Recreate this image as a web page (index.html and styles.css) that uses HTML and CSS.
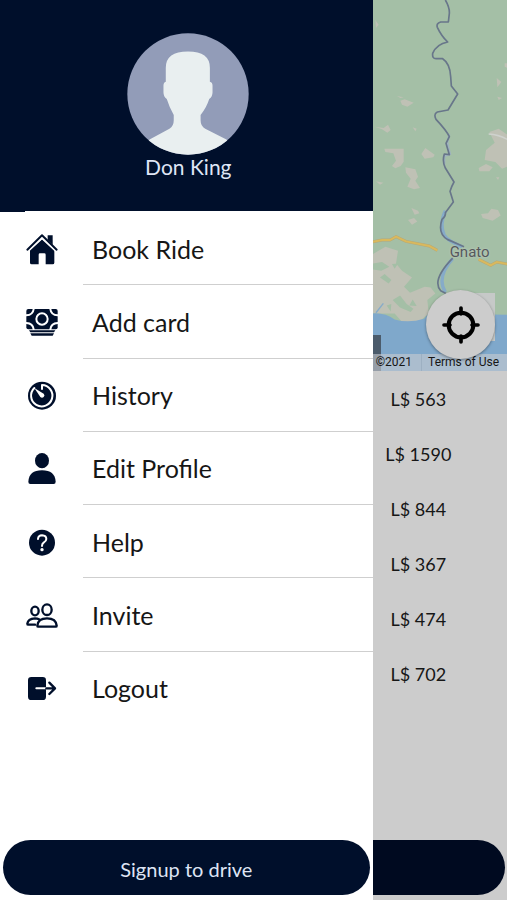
FILE: index.html
```html
<!DOCTYPE html>
<html lang="en">
<head>
<meta charset="utf-8">
<meta name="viewport" content="width=device-width, initial-scale=1">
<title>Ride menu</title>
<link rel="stylesheet" href="styles.css">
</head>
<body>
<div class="app">
  <aside class="drawer">
    <header class="profile">
      <svg class="avatar" viewBox="80 37 368 368" aria-hidden="true">
        <defs><clipPath id="disc"><circle cx="264" cy="221" r="183"/></clipPath></defs>
        <g clip-path="url(#disc)">
          <rect x="80" y="37" width="368" height="368" fill="#929cb8"/>
          <path fill="#e9eff0" d="M197 184V142Q197 93 264 93Q330 93 330 142V184Q338 186 338 196V216Q338 230 328 236Q320 262 302 284V300Q302 318 316 326L380 358L420 410H110L148 358L208 326Q221 318 221 300V284Q208 262 200 236Q190 230 190 216V196Q190 186 197 184Z"/>
        </g>
      </svg>
      <h1 class="name">Don King</h1>
    </header>

    <nav class="menu">
      <a class="item" href="#book">
        <svg class="icon" viewBox="0 0 96 96" aria-hidden="true">
          <path d="M12 51L48 18L85 51V89Q85 94 80 94H59V65Q59 61 55 61H42Q38 61 38 65V94H17Q12 94 12 89Z"/>
          <path d="M65 7H80V36L65 21Z"/>
          <path class="gap" d="M5 56L48 16L91 56"/>
          <path class="roof" d="M4 50L48 7L92 50"/>
        </svg>
        <span class="label">Book Ride</span>
      </a>
      <a class="item" href="#card">
        <svg class="icon" viewBox="0 0 96 96" aria-hidden="true">
          <rect x="1" y="9" width="94" height="61" rx="6"/>
          <g class="light" stroke-width="6">
            <circle cx="48" cy="39" r="17"/>
            <path d="M23 9Q21 27 1 28M73 9Q75 27 95 28M1 51Q21 52 23 70M95 51Q75 52 73 70"/>
          </g>
          <path d="M9 73H88L84 79H13ZM13 82H84L80 89H17Z"/>
        </svg>
        <span class="label">Add card</span>
      </a>
      <a class="item" href="#history">
        <svg class="icon" viewBox="0 0 96 96" aria-hidden="true">
          <circle cx="48" cy="50" r="42"/>
          <path class="light" stroke-width="6" d="M48 30V18A32 32 0 1 1 25 27"/>
          <path fill="#fff" d="M25 27L53 44A7 7 0 1 1 43 54Z"/>
        </svg>
        <span class="label">History</span>
      </a>
      <a class="item" href="#profile">
        <svg class="icon" viewBox="0 0 96 96" aria-hidden="true">
          <ellipse cx="48" cy="26" rx="21" ry="23"/>
          <path d="M7 89Q9 55 48 55Q87 55 89 89Q89 96 83 96H13Q7 96 7 89Z"/>
        </svg>
        <span class="label">Edit Profile</span>
      </a>
      <a class="item" href="#help">
        <svg class="icon" viewBox="0 0 96 96" aria-hidden="true">
          <circle cx="48" cy="50" r="39"/>
          <path class="light" stroke-width="6" d="M36 39Q37 28 48 28Q61 29 61 39Q61 45 53 50Q48 53 48 60"/>
          <circle cx="48" cy="71" r="5" fill="#fff"/>
        </svg>
        <span class="label">Help</span>
      </a>
      <a class="item" href="#invite">
        <svg class="icon line" viewBox="0 0 96 96" aria-hidden="true">
          <ellipse cx="63" cy="32" rx="14" ry="16"/>
          <ellipse cx="27" cy="36" rx="11" ry="13"/>
          <path d="M34 80Q36 58 63 58Q90 58 92 80Q92 83 89 83H37Q34 83 34 80Z"/>
          <path d="M39 61Q34 58 27 58Q6 59 4 74Q4 77 7 77H27"/>
        </svg>
        <span class="label">Invite</span>
      </a>
      <a class="item" href="#logout">
        <svg class="icon" viewBox="0 0 96 96" aria-hidden="true">
          <rect x="6" y="15" width="54" height="69" rx="10"/>
          <path class="light" stroke-width="6" d="M31 49H60"/>
          <path class="line" d="M61 49H86M70 32L87 49L70 66"/>
        </svg>
        <span class="label">Logout</span>
      </a>
    </nav>

    <button class="signup" type="button">Signup to drive</button>
  </aside>

  <main class="screen">
    <section class="map">
      <svg class="terrain" viewBox="23 0 403 1113" preserveAspectRatio="xMinYMin slice" aria-hidden="true">
        <rect x="0" width="440" height="1113" fill="#a4bfa6"/>
        <g fill="#bfc1b5">
          <path d="M105 302L118 298L145 308L126 320L110 314ZM95 288L115 292L105 294ZM28 380L55 384L68 374L76 390L66 398L50 388ZM57 446L115 446V485L106 498L90 505L80 498L92 482L84 460L60 456ZM120 502L150 508L158 530L150 542L164 564L146 568L126 560L136 536L122 518ZM168 462L180 444L208 464L204 472L178 476ZM372 396L400 386L426 404V500L410 506L390 486L358 480L362 450L388 428ZM340 504L362 492L382 502L372 514L342 514ZM394 234L408 246L396 262ZM396 290L410 294L400 300ZM392 532L402 532L398 540ZM418 190H426V204L418 200ZM142 382L154 386L150 394ZM32 544L54 548L44 554ZM30 60L40 74L32 84Z"/>
          <path d="M347 642L368 640L378 626L398 630L406 646L382 662L352 654ZM138 624L158 632L162 640L148 644ZM128 660L146 654L156 664L140 674Z"/>
          <path d="M23 762L60 740L98 752L92 790L110 812L140 832L116 860L134 878L178 860L196 862L210 880L186 900L190 940L160 966H110L88 940H23Z"/>
        </g>
        <g fill="#a4bfa6">
          <path d="M23 790L50 786L72 800L48 812L23 808ZM58 822L78 840L70 850L44 832ZM82 900L104 886L124 912L144 926L136 936L104 922ZM132 916L142 898L154 918ZM64 916L78 912L76 934ZM80 792L98 790L88 806Z"/>
        </g>
        <path fill="#7fa8cb" d="M23 940Q60 938 88 958Q130 970 176 956L190 940L426 944V1113H23Z"/>
        <path fill="none" stroke="#86abc9" stroke-width="4" d="M32 938L54 910"/>
        <path fill="none" stroke="#86abc9" stroke-width="10" d="M240 632Q222 670 236 704Q246 722 290 740M262 776Q212 832 240 876"/>
        <path fill="none" stroke="#9eb2c0" stroke-width="6" d="M252 402L246 428L254 462L237 468V494"/>
        <path fill="none" stroke="#68768a" stroke-width="5" stroke-linejoin="round" d="M240 0Q253 22 252 40L249 66H226Q212 70 216 82Q228 108 247 126Q214 132 202 160Q200 176 212 176H232Q254 190 256 230L258 258L277 282L248 330L216 336Q204 342 212 358Q244 392 252 410L242 430L252 464L237 462Q230 484 240 504L266 546Q258 560 254 574L264 606L240 638Q242 648 230 658Q216 700 246 718L296 740M262 774Q198 840 226 872L242 880"/>
        <path fill="none" stroke="#b5a878" stroke-width="9" d="M23 725L50 720H74L92 710L122 724L192 738L216 751M340 778L376 796L394 786L426 792"/>
        <path fill="none" stroke="#d9b95d" stroke-width="6" d="M23 725L50 720H74L92 710L122 724L192 738L216 751M340 778L376 796L394 786L426 792"/>
        <path fill="none" stroke="#cfd2ce" stroke-width="4" d="M370 402Q400 404 426 418"/>
      </svg>
      <span class="place">Gnato</span>
      <span class="control"></span>
      <span class="stub"></span>
      <div class="legal">
        <span class="year">©2021</span>
        <a class="terms" href="#terms">Terms of Use</a>
      </div>
      <button class="locate" type="button" aria-label="Centre on my location">
        <svg class="target" viewBox="0 0 114 114" aria-hidden="true">
          <circle cx="57" cy="57" r="37"/>
          <path d="M57 6V24M57 90V108M6 57H24M90 57H108"/>
        </svg>
      </button>
    </section>
    <ul class="prices">
      <li>L$ 563</li>
      <li>L$ 1590</li>
      <li>L$ 844</li>
      <li>L$ 367</li>
      <li>L$ 474</li>
      <li>L$ 702</li>
    </ul>
    <div class="request"></div>
  </main>
</div>
</body>
</html>
```
FILE: styles.css
```css
* { box-sizing: border-box; }

body {
  margin: 0;
  font-family: Lato, "Noto Sans", sans-serif;
  color: #161616;
  background: #cccccc;
}

.app {
  display: flex;
  min-height: 100vh;
}

.drawer {
  flex: 0 0 73.5%;
  display: flex;
  flex-direction: column;
  background: #fff;
}

.profile {
  position: relative;
  display: flex;
  flex-direction: column;
  align-items: center;
  height: 211px;
  padding-top: 33px;
  padding-left: 4px;
  background: #000f2b;
}

.profile::after {
  content: "";
  position: absolute;
  left: 0;
  top: 100%;
  width: 25px;
  height: 1px;
  background: #000f2b;
}

.avatar {
  display: block;
  width: 122px;
  height: 122px;
}

.name {
  margin: 0;
  font-size: 21px;
  line-height: 24px;
  font-weight: 400;
  color: #dfe5f5;
}

.menu {
  display: grid;
  grid-template-rows: repeat(7, 1fr);
  height: 513px;
  margin-top: 1px;
}

.item {
  display: grid;
  grid-template-columns: 83px 1fr;
  align-items: center;
  color: inherit;
  text-decoration: none;
}

.icon {
  width: 32px;
  height: 32px;
  margin-left: 26px;
  overflow: visible;
  fill: #000f2b;
}

.label {
  display: flex;
  align-items: center;
  height: 100%;
  padding-left: 9px;
  padding-top: 1px;
  font-size: 25px;
  border-bottom: 1px solid #cfcfcf;
}

.item:last-child .label { border-bottom-color: transparent; }

.gap, .roof, .light, .line { fill: none; stroke-linecap: round; stroke-linejoin: round; }
.gap { stroke: #fff; stroke-width: 5; }
.roof { stroke: #000f2b; stroke-width: 6; }
.light { stroke: #fff; }
.line { stroke: #000f2b; stroke-width: 7; }

.signup {
  height: 55px;
  margin: auto 3px 5px;
  padding: 2px 0 0;
  border: 0;
  border-radius: 28px;
  background: #000f2b;
  color: #dfe5f5;
  font: inherit;
  font-size: 20px;
}

.screen {
  flex: 1;
  min-width: 0;
  display: flex;
  flex-direction: column;
}

.map {
  position: relative;
  height: 371px;
  overflow: hidden;
  font-family: Roboto, sans-serif;
}

.terrain {
  display: block;
  width: 100%;
  height: 100%;
}

.place {
  position: absolute;
  left: 77px;
  top: 243px;
  font-size: 15px;
  line-height: 18px;
  color: #55585c;
  text-shadow: 0 0 2px #c8d0c8;
}

.control {
  position: absolute;
  right: 12px;
  top: 293px;
  width: 32px;
  height: 48px;
  background: #c6c9c8;
}

.stub {
  position: absolute;
  left: 0;
  bottom: 0;
  width: 8px;
  height: 36px;
  background: #4b5b6b;
}

.legal {
  position: absolute;
  left: 0;
  right: 0;
  bottom: 0;
  display: flex;
  height: 17px;
  font-size: 12px;
  line-height: 17px;
  background: rgba(200, 204, 208, 0.6);
}

.year { padding: 0 9px 0 3px; border-right: 1px solid #9db0c2; }
.terms { padding-left: 6px; color: inherit; text-decoration: none; white-space: nowrap; }

.locate {
  position: absolute;
  right: 12px;
  top: 290px;
  display: grid;
  place-items: center;
  width: 69px;
  height: 69px;
  padding: 0;
  border: 0;
  border-radius: 50%;
  background: #cccccc;
  box-shadow: 0 1px 3px rgba(0, 0, 0, 0.4);
}

.target {
  width: 38px;
  height: 38px;
  fill: none;
  stroke: #000;
  stroke-width: 12;
}

.target path { stroke-linecap: round; stroke-width: 11; }

.prices {
  margin: 0;
  padding: 1px 43px 0 0;
  list-style: none;
  font-size: 18px;
  line-height: 55px;
  text-align: center;
  white-space: nowrap;
}

.request {
  height: 55px;
  margin: auto 2px 5px 0;
  border-radius: 0 28px 28px 0;
  background: #000a20;
}
```
